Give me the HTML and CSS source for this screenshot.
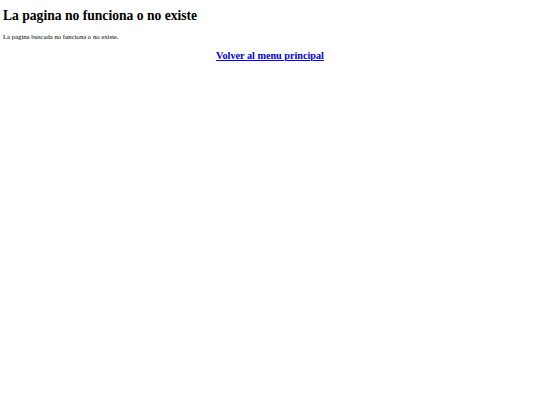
FILE: index.html
```html
<!DOCTYPE html>
<html>
<head>
<meta charset="utf-8">
<link rel="stylesheet" href="styles.css">
</head>
<body class="page">
<h1 class="title">La pagina no funciona o no existe</h1>
<p class="msg">La pagina buscada no funciona o no existe.</p>
<div class="back"><a class="back-link" href="#">Volver al menu principal</a></div>
</body>
</html>
```
FILE: styles.css
```css
html, body { background: #fff; }
.page {
  margin: 0;
  padding: 0 3px;
  font-family: "Liberation Serif", "Times New Roman", serif;
  color: #000;
}
.title {
  font-size: 13.6px;
  font-weight: bold;
  margin: 8px 0 0;
  line-height: 16px;
}
.msg {
  font-size: 6.7px;
  margin: 8px 0 0;
  line-height: 10px;
}
.back {
  text-align: center;
  margin-top: 7px;
  font-size: 10.2px;
  font-weight: bold;
  line-height: 14px;
}
.back-link { color: #0000ee; text-decoration: underline; }
```
